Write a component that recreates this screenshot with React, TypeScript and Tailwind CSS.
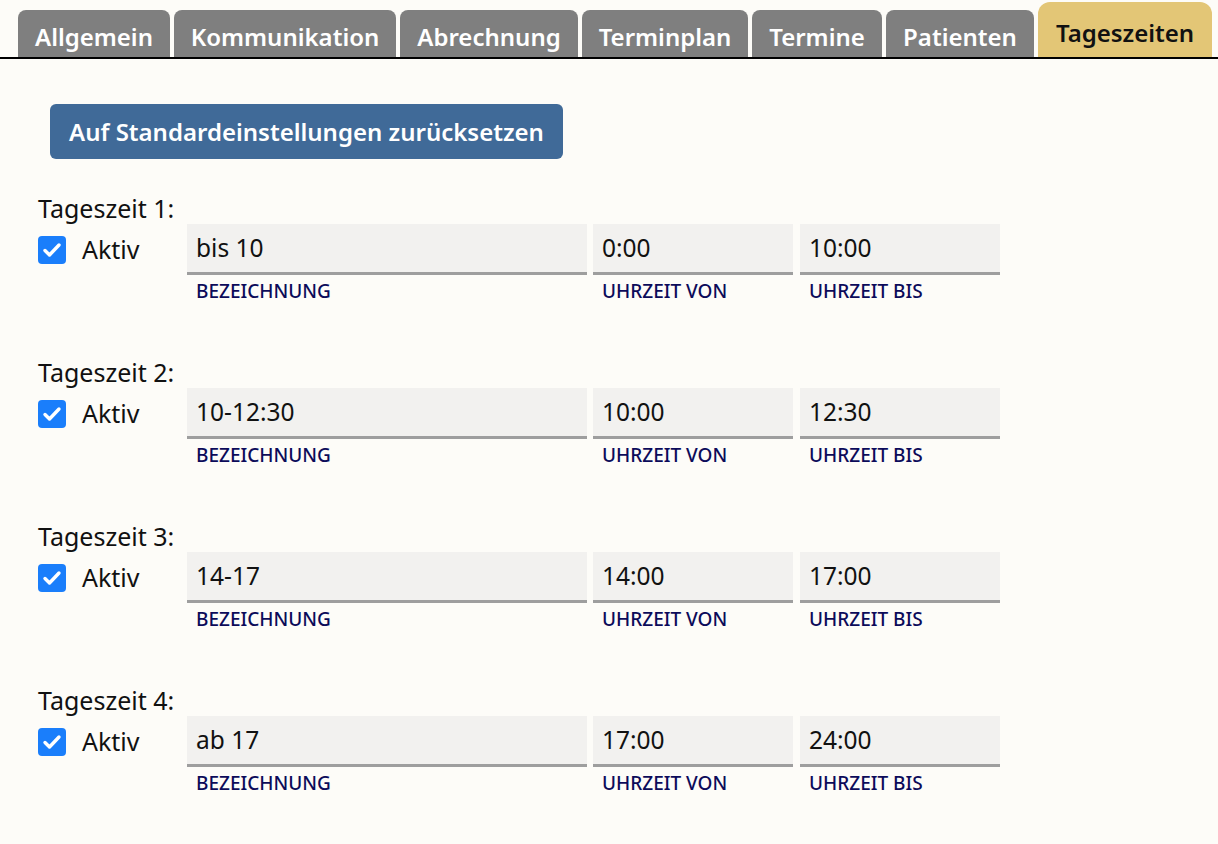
const tabs = [
  { label: "Allgemein", width: "w-[152px]" },
  { label: "Kommunikation", width: "w-[222px]" },
  { label: "Abrechnung", width: "w-[178px]" },
  { label: "Terminplan", width: "w-[166px]" },
  { label: "Termine", width: "w-[130px]" },
  { label: "Patienten", width: "w-[148px]" },
];

const slots = [
  { name: "bis 10", from: "0:00", to: "10:00" },
  { name: "10-12:30", from: "10:00", to: "12:30" },
  { name: "14-17", from: "14:00", to: "17:00" },
  { name: "ab 17", from: "17:00", to: "24:00" },
];

function Field({ value, label, width }: { value: string; label: string; width: string }) {
  return (
    <div className={`flex flex-col ${width}`}>
      <div className="flex h-[51px] items-center border-b-[3px] border-[#9e9e9e] bg-[#f2f1ef] px-[9px] text-[24.5px] text-[#111]">
        {value}
      </div>
      <div className="mt-[5px] px-[9px] text-[19px] leading-[22px] font-medium text-[#0c0b5a]">{label}</div>
    </div>
  );
}

function Checkbox() {
  return (
    <span className="flex h-[28px] w-[28px] items-center justify-center rounded-[4px] bg-[#1a7efb]">
      <svg viewBox="0 0 24 24" className="h-[24px] w-[24px]" fill="none" stroke="white" strokeWidth={3.4} strokeLinecap="round" strokeLinejoin="round">
        <path d="M5 12.5l4.5 4.5L19 7" />
      </svg>
    </span>
  );
}

export default function App() {
  return (
    <div className="min-h-[844px] bg-[#fdfcf8] font-['Noto_Sans',sans-serif] text-[#111]">
      <nav className="flex h-[59px] items-end gap-[4px] border-b-2 border-black pl-[18px]">
        {tabs.map((tab) => (
          <div
            key={tab.label}
            className={`flex h-[47px] items-end justify-center rounded-t-[8px] bg-[#7f7f7f] pb-[4px] text-[24px] leading-[32px] font-semibold text-white ${tab.width}`}
          >
            {tab.label}
          </div>
        ))}
        <div className="flex h-[55px] w-[174px] items-end justify-center rounded-t-[12px] bg-[#e3c676] pb-[8px] text-[24px] leading-[32px] font-semibold text-[#111]">
          Tageszeiten
        </div>
      </nav>

      <main className="pl-[38px] pt-[45px]">
        <button className="ml-[12px] flex h-[55px] w-[513px] items-center justify-center rounded-[6px] bg-[#406a98] text-[24px] font-semibold text-white">
          Auf Standardeinstellungen zurücksetzen
        </button>

        <div className="mt-[33px] flex flex-col gap-[54px]">
          {slots.map((slot, i) => (
            <section key={slot.name}>
              <h2 className="text-[25px] leading-[32px] font-normal">Tageszeit {i + 1}:</h2>
              <div className="flex items-start">
                <label className="flex h-[51px] w-[149px] items-center gap-[16px] text-[25px]">
                  <Checkbox />
                  Aktiv
                </label>
                <div className="flex gap-[6px]">
                  <Field value={slot.name} label="BEZEICHNUNG" width="w-[400px]" />
                  <Field value={slot.from} label="UHRZEIT VON" width="w-[200px]" />
                  <div className="ml-[1px]">
                    <Field value={slot.to} label="UHRZEIT BIS" width="w-[200px]" />
                  </div>
                </div>
              </div>
            </section>
          ))}
        </div>
      </main>
    </div>
  );
}
